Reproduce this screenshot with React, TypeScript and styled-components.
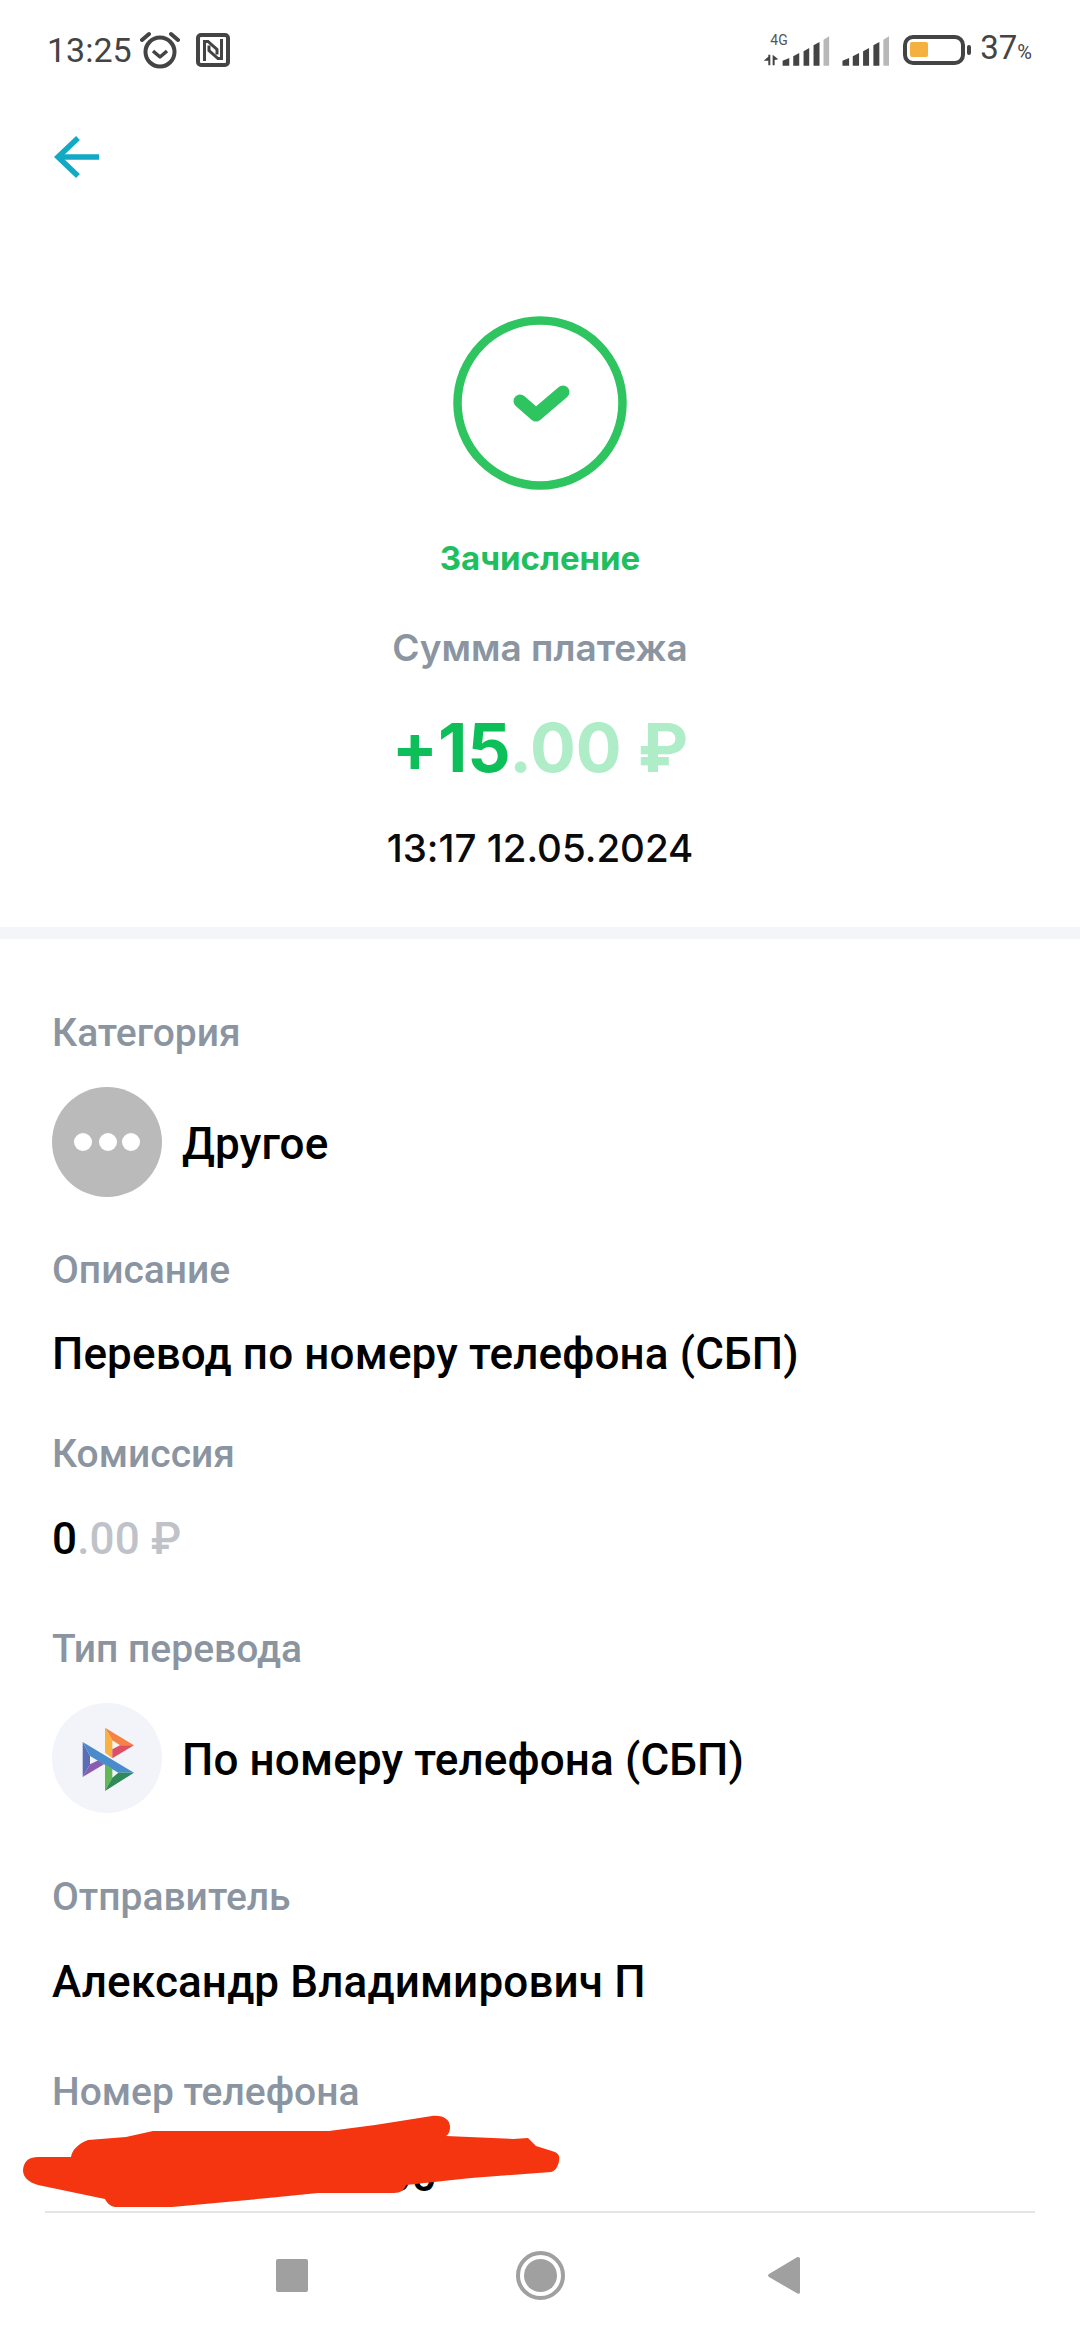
import React from "react"
import styled, { createGlobalStyle } from "styled-components"

const GlobalStyle = createGlobalStyle`
  html, body {
    margin: 0;
    padding: 0;
    background: #fff;
  }
`

const Screen = styled.div`
  width: 1080px;
  height: 2340px;
  display: flex;
  flex-direction: column;
  overflow: hidden;
  position: relative;
  background: #fff;
  font-family: Roboto, "Noto Sans", sans-serif;
`

const StatusBar = styled.div`
  height: 100px;
  flex: none;
  display: flex;
  align-items: center;
  justify-content: space-between;
  padding: 0 48px 0 47px;
  color: #444;
`

const StatusGroup = styled.div<{ $gap: number }>`
  display: flex;
  align-items: center;
  gap: ${({ $gap }) => $gap}px;
`

const Clock = styled.span`
  font-size: 34px;
  line-height: 40px;
  margin-right: -8px;
`

const Percent = styled.span`
  font-size: 33px;
  line-height: 40px;
  small {
    font-size: 20px;
  }
`

const Toolbar = styled.div`
  height: 114px;
  flex: none;
  display: flex;
  align-items: center;
  padding-left: 52px;
`

const Content = styled.div`
  flex: 1;
  min-height: 0;
  overflow: hidden;
`

const Hero = styled.section`
  display: flex;
  flex-direction: column;
  align-items: center;
  padding: 102px 0 57px;
  font-family: Inter, Roboto, sans-serif;
  font-feature-settings: "calt" 0;
`

const Status = styled.div`
  margin-top: 46px;
  font-size: 33px;
  line-height: 44px;
  font-weight: 700;
  color: #1fbf5f;
`

const SumLabel = styled.div`
  margin-top: 46px;
  font-size: 37px;
  line-height: 44px;
  font-weight: 600;
  color: #8b95a1;
`

const Amount = styled.div`
  margin-top: 42px;
  font-size: 68px;
  line-height: 70px;
  font-weight: 700;
  color: #0dbf58;
  span {
    color: #aeedc8;
  }
`

const DateText = styled.div`
  margin-top: 44px;
  font-size: 38.5px;
  line-height: 44px;
  font-weight: 500;
  color: #0a0a0a;
`

const Divider = styled.div`
  height: 12px;
  background: #f4f5f9;
`

const Details = styled.section`
  padding: 72px 52px 0;
`

const Label = styled.div<{ $top?: number }>`
  margin-top: ${({ $top }) => $top ?? 0}px;
  font-size: 39px;
  line-height: 44px;
  font-weight: 500;
  color: #8b95a1;
`

const Value = styled.div<{ $top?: number }>`
  margin-top: ${({ $top }) => $top ?? 40}px;
  font-size: 44px;
  line-height: 44px;
  font-weight: 500;
  letter-spacing: 0.15px;
  color: #000;
  white-space: nowrap;
  span {
    color: #bfc3c9;
  }
`

const IconRow = styled.div`
  margin-top: 32px;
  display: flex;
  align-items: center;
  gap: 20px;
  font-size: 44px;
  font-weight: 500;
  letter-spacing: 0.15px;
  color: #000;
`

const IconLabel = styled.span`
  padding-top: 3px;
`

const IconCircle = styled.div<{ $bg: string }>`
  width: 110px;
  height: 110px;
  flex: none;
  border-radius: 50%;
  background: ${({ $bg }) => $bg};
  display: flex;
  align-items: center;
  justify-content: center;
`

const Scribble = styled.svg`
  position: absolute;
  left: 0;
  top: 2100px;
`

const NavBar = styled.nav`
  height: 129px;
  flex: none;
  margin: 0 45px;
  border-top: 2px solid #e4e4e4;
  box-sizing: border-box;
  display: flex;
  justify-content: flex-start;
  align-items: center;
  padding: 0 0 2px 231px;
`

const NavSquare = styled.div`
  width: 32px;
  height: 33px;
  border-radius: 2px;
  background: #a0a0a0;
`

const NavHome = styled.div`
  width: 49px;
  height: 49px;
  margin: 0 203px 0 208px;
  box-sizing: border-box;
  border-radius: 50%;
  border: 4px solid #a0a0a0;
  padding: 4px;
  &::after {
    content: "";
    display: block;
    width: 100%;
    height: 100%;
    border-radius: 50%;
    background: #a0a0a0;
  }
`

const AlarmIcon = () => (
  <svg width="40" height="38" viewBox="0 0 40 38" fill="none" stroke="#444" strokeWidth="4">
    <circle cx="20" cy="21" r="14.5" />
    <path d="M13 20l7 6 7-6" strokeWidth="3.5" strokeLinejoin="round" />
    <path d="M2 9 9 3M38 9l-7-6" strokeLinecap="round" />
  </svg>
)

const NfcIcon = () => (
  <svg width="34" height="34" viewBox="0 0 34 34" fill="none" stroke="#444">
    <rect x="2" y="2" width="30" height="30" rx="3" strokeWidth="4" />
    <path d="M8.500 28V8.500h3.500l9 8v5" strokeWidth="3" />
    <path d="M25.500 6v19.500H22l-9-8v-5" strokeWidth="3" />
  </svg>
)

const SignalIcon = () => (
  <svg width="133" height="35" viewBox="120 95 400 105" fill="#444">
    <text x="148" y="132" fontSize="42" fontFamily="Roboto, sans-serif" fill="#555">4G</text>
    <path d="M128 178l14-12v-6h6v32h-6v-14zM155 160l17 14-11 2v16h-6z" />
    <path d="M185 178l20-8v23h-20zM217 165l18-10v38h-18zM248 150l17-10v53h-17zM278 132l18-10v71h-18z" />
    <path d="M308 115l17-10v88h-17z" fill="#b8b8b8" />
    <path d="M365 178l20-8v23h-20zM396 165l19-10v38h-19zM427 150l18-10v53h-18zM458 132l18-10v71h-18z" />
    <path d="M488 115l17-10v88h-17z" fill="#b8b8b8" />
  </svg>
)

const BatteryIcon = () => (
  <svg width="68" height="30" viewBox="0 0 68 30" fill="none">
    <rect x="2" y="2" width="58" height="26" rx="8" stroke="#444" strokeWidth="4" />
    <rect x="7" y="7" width="18" height="15" rx="2" fill="#f4b13f" />
    <rect x="64" y="10" width="4" height="10" rx="2" fill="#444" />
  </svg>
)

const BackArrow = () => (
  <svg width="47" height="44" viewBox="0 0 47 44" fill="none" stroke="#12a9c4" strokeWidth="5.5">
    <path d="M47 22H7" />
    <path d="M26 3 6 22l20 19" />
  </svg>
)

const SuccessIcon = () => (
  <svg width="174" height="174" viewBox="0 0 174 174" fill="none" stroke="#2ec45f">
    <circle cx="87" cy="87" r="82.500" strokeWidth="8.500" />
    <path d="M67 85l16 14 27-23" strokeWidth="13" strokeLinecap="round" strokeLinejoin="round" />
  </svg>
)

const DotsIcon = () => (
  <svg width="66" height="20" viewBox="0 0 66 20" fill="#fff">
    <circle cx="9" cy="10" r="9" />
    <circle cx="34" cy="10" r="9" />
    <circle cx="57" cy="10" r="9" />
  </svg>
)

const SbpLogo = () => (
  <svg width="110" height="110" viewBox="66 66 330 330">
    <path d="M225 140l87 53-42 0-23-15z" fill="#f58345" />
    <path d="M225 140l22 38v54l-22-17z" fill="#f9b13f" />
    <path d="M312 193l-65 39v-27l23-12z" fill="#dd4f66" />
    <path d="M158 183v105l22-38v-25z" fill="#5a6db5" />
    <path d="M158 288l22-38 25-12 17 12z" fill="#8a5db0" />
    <path d="M158 183l154 92-47 0-85-50z" fill="#4a8ccb" />
    <path d="M225 250v80l22-40v-26z" fill="#62b857" />
    <path d="M225 330l87-55-47 0-18 15z" fill="#2f8a57" />
  </svg>
)

const TriangleIcon = () => (
  <svg width="32" height="37" viewBox="0 0 32 37" fill="#a0a0a0">
    <path d="M30 0c1.500 0 2 .700 2 2v33c0 1.500-1 2.300-2.500 1.600L1 20c-1.300-.8-1.300-2.200 0-3L29 .3z" />
  </svg>
)

export default function App() {
  return (
    <Screen>
      <GlobalStyle />
      <StatusBar>
        <StatusGroup $gap={16}>
          <Clock>13:25</Clock>
          <AlarmIcon />
          <NfcIcon />
        </StatusGroup>
        <StatusGroup $gap={9}>
          <SignalIcon />
          <BatteryIcon />
          <Percent>
            37<small>%</small>
          </Percent>
        </StatusGroup>
      </StatusBar>
      <Toolbar>
        <BackArrow />
      </Toolbar>
      <Content>
        <Hero>
          <SuccessIcon />
          <Status>Зачисление</Status>
          <SumLabel>Сумма платежа</SumLabel>
          <Amount>
            +15<span>.00 ₽</span>
          </Amount>
          <DateText>13:17 12.05.2024</DateText>
        </Hero>
        <Divider />
        <Details>
          <Label>Категория</Label>
          <IconRow>
            <IconCircle $bg="#bababa">
              <DotsIcon />
            </IconCircle>
            <IconLabel>Другое</IconLabel>
          </IconRow>
          <Label $top={51}>Описание</Label>
          <Value>Перевод по номеру телефона (СБП)</Value>
          <Label $top={56}>Комиссия</Label>
          <Value $top={41}>
            0<span>.00 ₽</span>
          </Value>
          <Label $top={66}>Тип перевода</Label>
          <IconRow>
            <IconCircle $bg="#f2f4f9">
              <SbpLogo />
            </IconCircle>
            <IconLabel>По номеру телефона (СБП)</IconLabel>
          </IconRow>
          <Label $top={62}>Отправитель</Label>
          <Value $top={41}>Александр Владимирович П</Value>
          <Label $top={66}>Номер телефона</Label>
          <Value $top={40}>+7 (900) 000-00-00</Value>
        </Details>
      </Content>
      <NavBar>
        <NavSquare />
        <NavHome />
        <TriangleIcon />
      </NavBar>
      <Scribble width="580" height="120" viewBox="0 2100 580 120">
        <path
          d="M23 2170C24 2160 30 2157 38 2157L71 2157C72 2150 78 2144 88 2140L126 2137L153 2131L329 2131L375 2125L432 2116C444 2115 450 2120 450 2127C450 2132 448 2135 446 2136L513 2139L528 2138L536 2146L555 2152C559 2154 560 2157 559 2161C558 2167 555 2171 551 2172L471 2178L406 2185C405 2190 400 2193 394 2193L318 2193L268 2198L172 2207L115 2207C110 2206 107 2203 105 2199L38 2185C28 2182 23 2177 23 2170Z"
          fill="#f43510"
        />
      </Scribble>
    </Screen>
  )
}
